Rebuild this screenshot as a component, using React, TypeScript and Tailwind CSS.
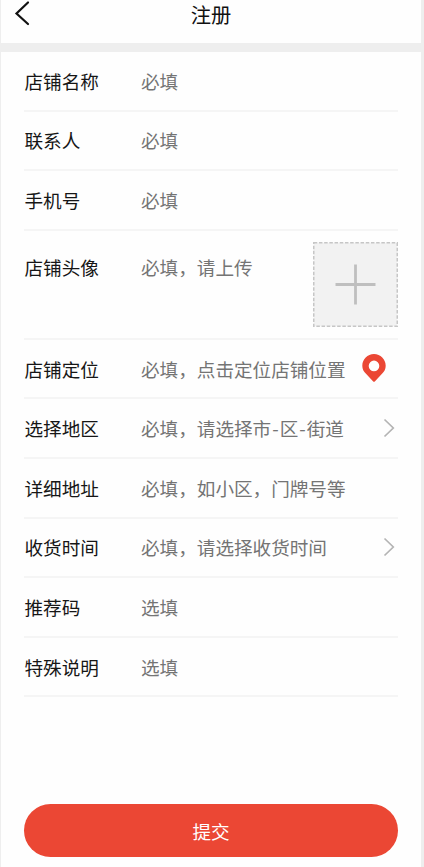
import type { ReactNode } from "react";

type RowProps = {
    label: string;
    hint: ReactNode;
    children?: ReactNode;
}

const Row = ({ label, hint, children }: RowProps) => {
    return (
        <div className="flex h-[59.6px] items-center border-b-2 border-[#f5f5f5]">
            <div className="w-[117px] shrink-0 pl-[0.5px] text-[#161616]">{label}</div>
            <div className="grow whitespace-nowrap text-[#747474]">{hint}</div>
            {children}
        </div>
    )
}

const Arrow = () => {
    return (
        <svg className="mr-[3px] h-5 w-3 shrink-0" viewBox="0 0 12 20" fill="none" stroke="#b4b4b4" strokeWidth="1.7">
            <path d="M1.5 1.5 10.3 10 1.5 18.5" />
        </svg>
    )
}

const Pin = () => {
    return (
        <svg className="mr-3 mb-px h-7 w-6 shrink-0" viewBox="0 0 24 28">
            <path
                fill="#eb4734"
                fillRule="evenodd"
                d="M12 0C5.5 0 .3 5.2.3 11.7c0 3.3 1.3 5.7 3.7 8.1l7.2 7.6c.5.5 1.1.5 1.600 0l7.200-7.600c2.400-2.400 3.700-4.800 3.700-8.100C23.700 5.200 18.500 0 12 0ZM12 6.600a5.300 5.300 0 1 1 0 10.600a5.300 5.300 0 0 1 0-10.600Z"
            />
        </svg>
    )
}

const App = () => {
    return (
        <div className="flex h-[867px] w-[424px] flex-col overflow-hidden border-l border-r-3 border-[#eee] bg-[#fefefe] font-['Noto_Sans_CJK_SC',sans-serif] text-[18.6px]">
            <header className="grid h-[43px] shrink-0 grid-cols-[60px_1fr_60px] pb-[14px]">
                <svg className="ml-[13px] h-[29px] w-[18px]" viewBox="0 0 18 29" fill="none" stroke="#111" strokeWidth="2.2" strokeLinecap="round">
                    <path d="M14 2.5 2.5 13.5 14 24" />
                </svg>
                <h1 className="text-center text-[20.3px] leading-[29px] text-[#111]">注册</h1>
            </header>
            <div className="h-[9px] shrink-0 bg-[#eee]" />

            <main className="flex grow flex-col px-[23px]">
                <Row label="店铺名称" hint="必填" />
                <Row label="联系人" hint="必填" />
                <Row label="手机号" hint="必填" />
                <div className="flex h-[109px] items-start border-b-2 border-[#f5f5f5] pt-[11px]">
                    <div className="mt-[11px] w-[117px] shrink-0 pl-[0.5px] text-[#161616]">店铺头像</div>
                    <div className="mt-[11px] grow text-[#747474]">必填，请上传</div>
                    <svg className="h-[85px] w-[85px] shrink-0" viewBox="0 0 85 85" fill="none">
                        <rect x=".75" y=".75" width="83.5" height="83.5" fill="#f2f2f2" stroke="#c6c6c6" strokeWidth="1.5" strokeDasharray="3.5 1.7" />
                        <path stroke="#bfbfbf" strokeWidth="2.8" d="M42.5 22.5v40M22.5 42.5h40" />
                    </svg>
                </div>
                <Row label="店铺定位" hint="必填，点击定位店铺位置">
                    <Pin />
                </Row>
                <Row label="选择地区" hint={<>必填，请选择市<span className="mx-px">-</span>区<span className="mx-px">-</span>街道</>}>
                    <Arrow />
                </Row>
                <Row label="详细地址" hint="必填，如小区，门牌号等" />
                <Row label="收货时间" hint="必填，请选择收货时间">
                    <Arrow />
                </Row>
                <Row label="推荐码" hint="选填" />
                <Row label="特殊说明" hint="选填" />

                <button className="mt-auto mb-[10px] h-[53px] shrink-0 rounded-full bg-[#eb4734] text-[18.6px] text-white">
                    提交
                </button>
            </main>
        </div>
    )
}

export default App;
